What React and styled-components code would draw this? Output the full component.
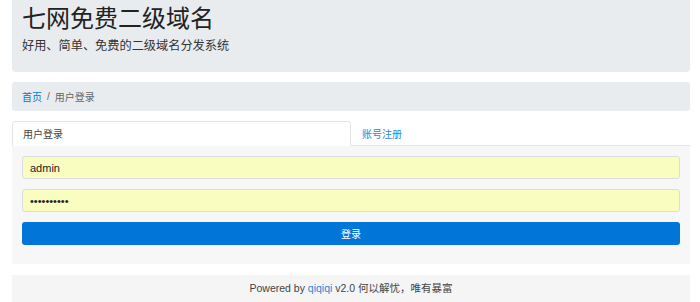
import React from 'react';
import styled, { createGlobalStyle } from 'styled-components';

const GlobalStyle = createGlobalStyle`
    html, body {
        margin: 0;
        padding: 0;
        background: #fff;
        font-family: 'Liberation Sans', 'Noto Sans CJK SC', sans-serif;
        color: #333;
    }
`;

const App = () => {
    return (
        <>
            <GlobalStyle />
            <Page>
                <Jumbotron>
                    <Title>七网免费二级域名</Title>
                    <Subtitle>好用、简单、免费的二级域名分发系统</Subtitle>
                </Jumbotron>
                <Breadcrumb>
                    <Crumb href="#">首页</Crumb>
                    <Divider>/</Divider>
                    <Current>用户登录</Current>
                </Breadcrumb>
                <Tabs>
                    <Tab active>用户登录</Tab>
                    <Tab>账号注册</Tab>
                </Tabs>
                <Panel>
                    <Input type="text" defaultValue="admin" />
                    <Input type="password" defaultValue="1234567890" />
                    <Button>登录</Button>
                </Panel>
                <Footer>
                    <span>
                        Powered by <FooterLink href="#">qiqiqi</FooterLink> v2.0 何以解忧，唯有暴富
                    </span>
                </Footer>
            </Page>
        </>
    );
};
export default App;

const Page = styled.div`
    display: flex;
    flex-direction: column;
    margin: 0 10px 0 12px;
`;
const Jumbotron = styled.div`
    height: 72px;
    box-sizing: border-box;
    padding: 3px 10px 0;
    background: #e9ecef;
    border-radius: 0 0 4px 4px;
`;
const Title = styled.h1`
    margin: 0;
    font-size: 24px;
    font-weight: 400;
    line-height: 32px;
    color: #222;
`;
const Subtitle = styled.p`
    margin: 3px 0 0;
    font-size: 12.2px;
    line-height: 16px;
    color: #333;
`;
const Breadcrumb = styled.div`
    display: flex;
    align-items: center;
    margin-top: 10px;
    height: 29px;
    padding: 0 10px;
    background: #e9ecef;
    border-radius: 3px;
    font-size: 10px;
`;
const Crumb = styled.a`
    color: #0275d8;
    text-decoration: none;
`;
const Divider = styled.span`
    margin: 0 5px;
    color: #666;
`;
const Current = styled.span`
    color: #666;
`;
const Tabs = styled.div`
    display: flex;
    margin-top: 10px;
    height: 25px;
    box-sizing: border-box;
    border-bottom: 1px solid #e4e4e4;
`;
const Tab = styled.div`
    flex: 1;
    display: flex;
    align-items: center;
    padding: 0 10px;
    margin-bottom: -1px;
    font-size: 10px;
    cursor: pointer;
    color: ${p => (p.active ? '#444' : '#2d86dc')};
    background: ${p => (p.active ? '#fff' : 'transparent')};
    border: 1px solid ${p => (p.active ? '#e4e4e4' : 'transparent')};
    border-bottom-color: ${p => (p.active ? '#fff' : 'transparent')};
    border-radius: 3px 3px 0 0;
`;
const Panel = styled.div`
    display: flex;
    flex-direction: column;
    gap: 10px;
    padding: 10px 10px 19px;
    background: #f7f7f7;
`;
const Input = styled.input`
    height: 23px;
    box-sizing: border-box;
    padding: 0 7px;
    border: 1px solid #dcdcdc;
    border-radius: 3px;
    background: #fafdc0;
    font-family: 'Liberation Sans', 'Noto Sans CJK SC', sans-serif;
    font-size: 11px;
    color: #222;
    outline: none;
`;
const Button = styled.button`
    height: 23px;
    border: none;
    border-radius: 3px;
    background: #0275d8;
    color: #fff;
    font-family: 'Liberation Sans', 'Noto Sans CJK SC', sans-serif;
    font-size: 10px;
    cursor: pointer;
`;
const Footer = styled.div`
    margin-top: 11px;
    height: 30px;
    display: flex;
    align-items: center;
    justify-content: center;
    padding-bottom: 5px;
    box-sizing: border-box;
    background: #f5f5f5;
    font-size: 10.5px;
    color: #444;
`;
const FooterLink = styled.a`
    color: #2d86dc;
    text-decoration: none;
`;
